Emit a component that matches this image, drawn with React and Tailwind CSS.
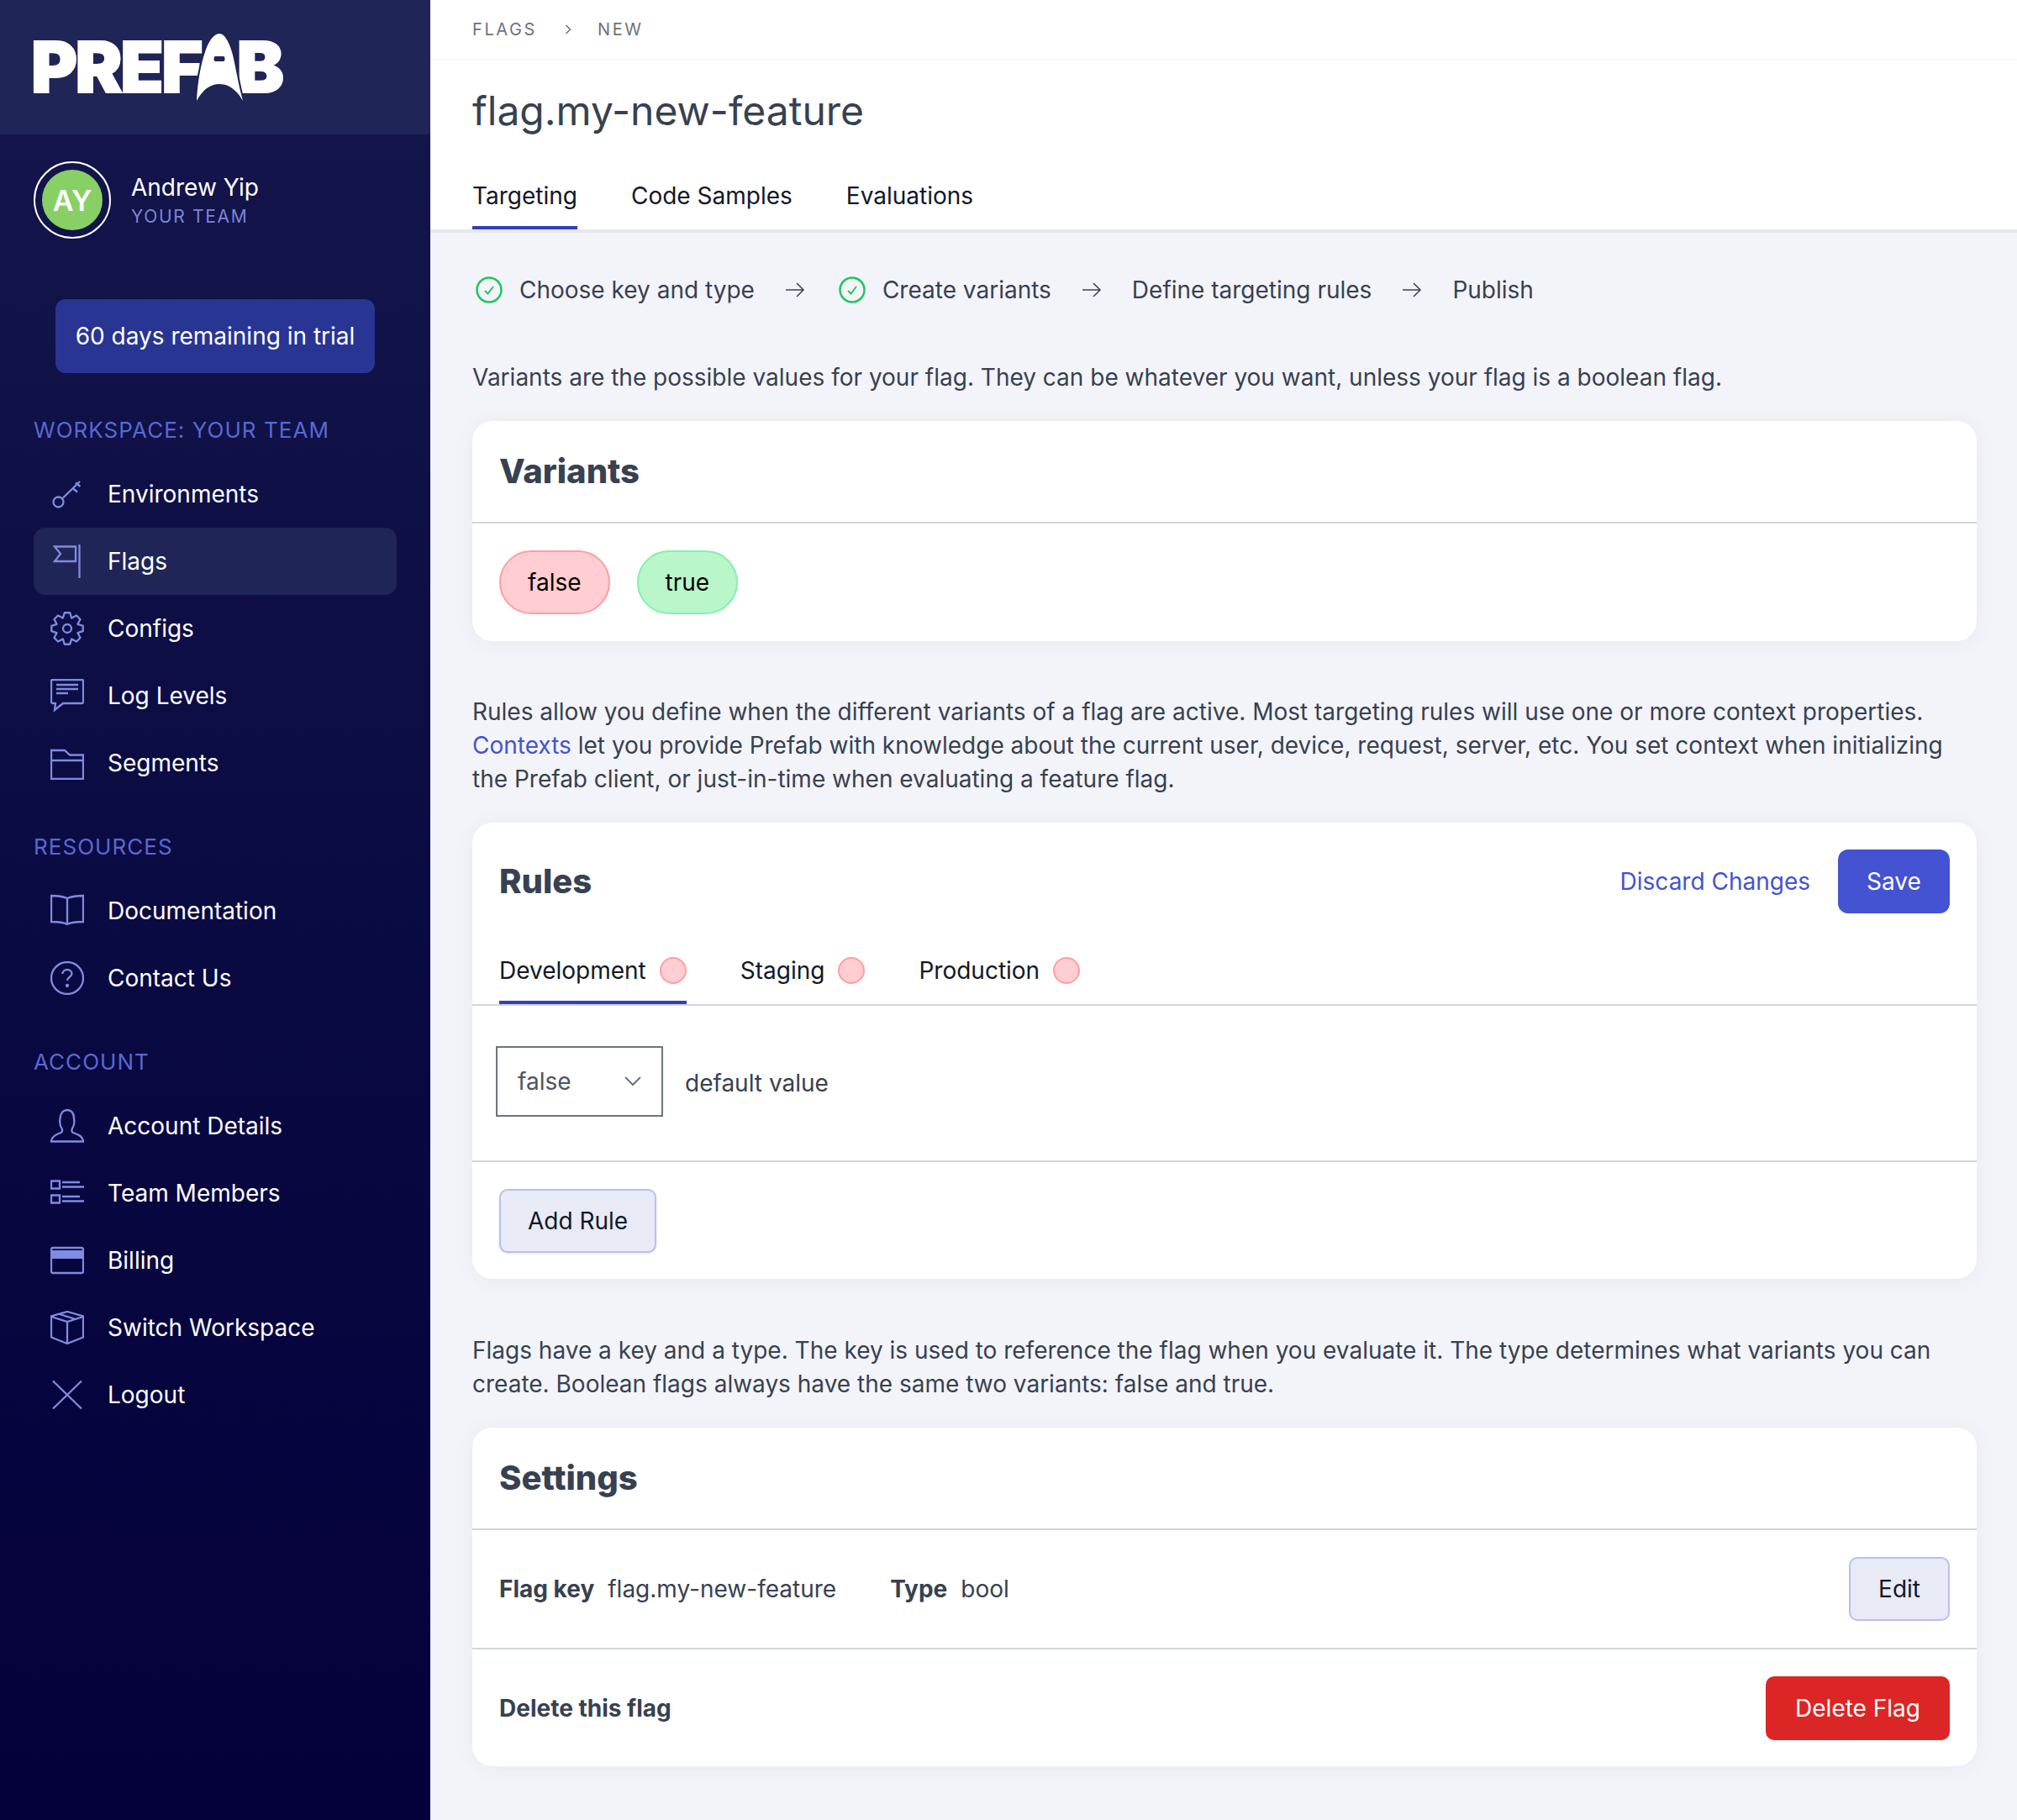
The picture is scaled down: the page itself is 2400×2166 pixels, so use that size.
import React from "react";

const gearPath = () => {
  const pts = [];
  for (let i = 0; i < 8; i++) {
    const a = (i * Math.PI) / 4 - Math.PI / 2;
    const offs = [[-0.39, 13.5], [-0.17, 19], [0.17, 19], [0.39, 13.5]];
    offs.forEach(([d, r]) => {
      pts.push(`${(20 + r * Math.cos(a + d)).toFixed(2)} ${(20 + r * Math.sin(a + d)).toFixed(2)}`);
    });
  }
  return "M" + pts.join("L") + "Z";
};

const Icon = ({ children }) => (
  <svg viewBox="0 0 40 40" className="w-10 h-10 shrink-0 text-[#7f8ce0]" fill="none" stroke="currentColor" strokeWidth="2.300">
    {children}
  </svg>
);

const icons = {
  key: (
    <Icon>
      <circle cx="9.500" cy="29.500" r="6" />
      <path d="M14 25.500L35 5M30 6.500l5.500 4.500M26.500 13l5.500 4.500" />
    </Icon>
  ),
  flag: (
    <Icon>
      <path d="M34.500 0v40" />
      <path d="M30 2.500H5l7 8.500-7 9h25z" />
    </Icon>
  ),
  gear: (
    <Icon>
      <path d={gearPath()} strokeLinejoin="round" />
      <circle cx="20" cy="20" r="5" />
    </Icon>
  ),
  log: (
    <Icon>
      <path d="M2.500 1h35a1.500 1.500 0 0 1 1.500 1.500v25a1.500 1.500 0 0 1-1.500 1.500H15l-10 8 1-8H2.500A1.500 1.500 0 0 1 1 27.500v-25A1.500 1.500 0 0 1 2.500 1z" />
      <path d="M7 7h26M7 12h26M7 17h14" />
    </Icon>
  ),
  folder: (
    <Icon>
      <path d="M1 5h16l6 5.500h16V39H1zM1 17h38" />
    </Icon>
  ),
  book: (
    <Icon>
      <path d="M20 5c-5-2-12-3-19-3v31c7 0 14 .500 19 3 5-2.500 12-3 19-3V2c-7 0-14 1-19 3zM20 5v31" />
    </Icon>
  ),
  help: (
    <Icon>
      <circle cx="20" cy="20" r="19" />
      <path d="M14.500 15c0-3 2.500-5 5.500-5s5.500 2 5.500 4.800c0 4-5.500 4-5.500 8.200" />
      <circle cx="20" cy="29" r="1" fill="currentColor" />
    </Icon>
  ),
  user: (
    <Icon>
      <path d="M1 38.500h38c0-6-6-8.500-12-10.500-2-1-2-3.500-.5-6 2.500-3 2-6.500 1.500-11C28 4 24 1 20 1S12 4 11.500 11c-.5 4.500-1 8 1.500 11 1.500 2.500 1.500 5-.5 6C6.500 30 1 32.500 1 38.500z" />
    </Icon>
  ),
  list: (
    <Icon>
      <path d="M1 5.500h10v9H1zM1 22.500h10v9H1zM14 7h21M14 12.500h26M14 24h21M14 29.500h26" />
    </Icon>
  ),
  card: (
    <Icon>
      <rect x="1" y="5" width="38" height="30" rx="2" />
      <rect x="1" y="8" width="38" height="10" fill="currentColor" stroke="none" />
    </Icon>
  ),
  box: (
    <Icon>
      <path d="M20 1 39 6.500v25L20 39 1 31.500v-25zM1 7l19 6 19-6M20 13v26M11 4l19 6" />
    </Icon>
  ),
  x: (
    <Icon>
      <path d="M3 3.500 37 36.500M37 3.500 3 36.500" />
    </Icon>
  ),
};

const NavItem = ({ icon, label, active }) => (
  <div className={`h-20 rounded-[14px] flex items-center pl-5 ${active ? "bg-[#1f2557]" : ""}`}>
    {icons[icon]}
    <span className="ml-[28px] text-[28px] text-white">{label}</span>
  </div>
);

const SectionLabel = ({ children, className }) => (
  <div className={`text-[26px] leading-10 tracking-[0.04em] text-[#5a68d2] uppercase ${className}`}>{children}</div>
);

const Logo = () => (
  <div className="flex items-start h-[80px] -ml-[3px] text-white font-black text-[84px] leading-[80px] tracking-[-0.03em]">
    <span className="[-webkit-text-stroke:2px_white]">PREF</span>
    <svg viewBox="0 0 57 80" className="relative z-10 w-[57px] h-20 -ml-[6px] shrink-0 overflow-visible">
      {/* rocket stands in for the A */}
      <path
        fill="white"
        stroke="#1f2557"
        strokeWidth="4"
        paintOrder="stroke"
        fillRule="evenodd"
        d="M28 0c6 0 11 9 15 22 4 14 7 36 13 58-5-9-14-20-28-20S6 71 1 80c1-22 5-44 10-58C15 9 22 0 28 0zM23 27c-2 0-2 6 0 6h10c2 0 2-6 0-6z"
      />
    </svg>
    <span className="-ml-[8px] [-webkit-text-stroke:2px_white]">B</span>
  </div>
);

const Card = ({ children, className }) => (
  <section className={`bg-white rounded-[24px] shadow-[0_2px_24px_rgba(60,70,130,0.06)] ${className}`}>{children}</section>
);

const Check = ({ className }) => (
  <svg viewBox="0 0 32 32" className={`w-8 h-8 shrink-0 ${className}`} fill="none" stroke="#22c55e" strokeWidth="2.500">
    <circle cx="16" cy="16" r="14.500" />
    <path d="M11 17l3.500 3.500L21 12" strokeWidth="2" />
  </svg>
);

const Arrow = () => (
  <svg viewBox="0 0 24 24" className="w-6 h-6 mx-[36px] shrink-0" fill="none" stroke="#374151" strokeWidth="1.500">
    <path d="M1 12h21M14 4l8 8-8 8" />
  </svg>
);

const Dot = () => <span className="ml-4 w-8 h-8 rounded-full bg-[#ffcdd2] border-2 border-[#ff9e9e]" />;

const EnvTab = ({ label, active }) => (
  <div className={`h-[76px] flex items-center border-b-4 ${active ? "border-[#3240b8]" : "border-transparent"}`}>
    <span className="text-[#111827]">{label}</span>
    <Dot />
  </div>
);

export default function App() {
  return (
    <div className="flex min-h-[2166px] bg-[#f3f4f9] font-['Inter',sans-serif] text-[#374151]">
      <aside className="w-[512px] shrink-0 flex flex-col bg-gradient-to-b from-[#15164b] to-[#04003a]">
        <div className="h-[160px] bg-[#1f2557] pl-10 pt-10 shrink-0">
          <Logo />
        </div>
        <div className="h-[156px] flex items-center pl-10 shrink-0">
          <div className="w-[92px] h-[92px] rounded-full border-2 border-white flex items-center justify-center">
            <div className="w-[72px] h-[72px] rounded-full bg-[#88d066] flex items-center justify-center text-white font-semibold text-[34px]">AY</div>
          </div>
          <div className="ml-6">
            <div className="text-[28px] leading-9 text-white">Andrew Yip</div>
            <div className="mt-[3px] text-[21px] leading-7 tracking-[0.08em] text-[#7986d8]">YOUR TEAM</div>
          </div>
        </div>
        <div className="px-[66px] mt-10 shrink-0">
          <div className="h-[88px] rounded-[12px] bg-[#283593] flex items-center justify-center text-white text-[28px]">60 days remaining in trial</div>
        </div>
        <div className="px-10 mt-[48px]">
          <SectionLabel>Workspace: Your Team</SectionLabel>
          <div className="mt-[16px]">
            <NavItem icon="key" label="Environments" />
            <NavItem icon="flag" label="Flags" active />
            <NavItem icon="gear" label="Configs" />
            <NavItem icon="log" label="Log Levels" />
            <NavItem icon="folder" label="Segments" />
          </div>
          <SectionLabel className="mt-[40px]">Resources</SectionLabel>
          <div className="mt-[16px]">
            <NavItem icon="book" label="Documentation" />
            <NavItem icon="help" label="Contact Us" />
          </div>
          <SectionLabel className="mt-[40px]">Account</SectionLabel>
          <div className="mt-[16px]">
            <NavItem icon="user" label="Account Details" />
            <NavItem icon="list" label="Team Members" />
            <NavItem icon="card" label="Billing" />
            <NavItem icon="box" label="Switch Workspace" />
            <NavItem icon="x" label="Logout" />
          </div>
        </div>
      </aside>

      <main className="flex-1 min-w-0">
        <div className="h-[70px] bg-white flex items-center pl-[50px] pb-[1px] text-[20px] tracking-[0.13em] text-[#6b7280] shadow-[0_1px_3px_rgba(0,0,0,0.05)] relative">
          <span>FLAGS</span>
          <svg viewBox="0 0 12 12" className="w-3 h-3 ml-[31px] mr-[29px]" fill="none" stroke="#6b7280" strokeWidth="1.500">
            <path d="M3.500 1l5 5-5 5" />
          </svg>
          <span>NEW</span>
        </div>
        <div className="h-[207px] bg-white border-b-4 border-[#e5e7eb] pl-[50px] flex flex-col">
          <h1 className="mt-[29px] text-[48px] leading-[66px] text-[#374151]">flag.my-new-feature</h1>
          <div className="mt-[32px] flex gap-[64px] text-[28px] text-[#111827]">
            <div className="h-[76px] flex items-center border-b-4 border-[#3240b8]">Targeting</div>
            <div className="h-[76px] flex items-center border-b-4 border-transparent">Code Samples</div>
            <div className="h-[76px] flex items-center border-b-4 border-transparent">Evaluations</div>
          </div>
        </div>

        <div className="pl-[50px] pr-[48px] text-[28px]">
          <div className="mt-[48px] h-10 flex items-center pl-1">
            <Check />
            <span className="ml-5">Choose key and type</span>
            <Arrow />
            <Check className="ml-1" />
            <span className="ml-5">Create variants</span>
            <Arrow />
            <span>Define targeting rules</span>
            <Arrow />
            <span>Publish</span>
          </div>

          <p className="mt-[64px] leading-10">Variants are the possible values for your flag. They can be whatever you want, unless your flag is a boolean flag.</p>

          <Card className="mt-[32px] h-[262px]">
            <div className="h-[122px] border-b-2 border-[#d1d5db] flex items-center pl-8">
              <h2 className="text-[40px] font-extrabold text-[#374151]">Variants</h2>
            </div>
            <div className="flex gap-8 pl-8 pt-8">
              <span className="h-[76px] px-8 flex items-center rounded-full bg-[#ffcdd2] border-2 border-[#ff9e9e] text-black">false</span>
              <span className="h-[76px] px-8 flex items-center rounded-full bg-[#b9f6ca] border-2 border-[#86efac] text-black">true</span>
            </div>
          </Card>

          <p className="mt-[64px] leading-10">
            Rules allow you define when the different variants of a flag are active. Most targeting rules will use one or more context properties.{" "}
            <span className="text-[#4353d1]">Contexts</span> let you provide Prefab with knowledge about the current user, device, request, server, etc. You set context when initializing the Prefab client, or just-in-time when evaluating a feature flag.
          </p>

          <Card className="mt-[32px] h-[543px]">
            <div className="flex items-center justify-between px-8 pt-8">
              <h2 className="text-[40px] font-extrabold text-[#374151]">Rules</h2>
              <div className="flex items-center">
                <span className="text-[#4353d1]">Discard Changes</span>
                <span className="ml-[33px] h-[76px] w-[133px] rounded-[12px] bg-[#4353d1] text-white flex items-center justify-center">Save</span>
              </div>
            </div>
            <div className="mt-[32px] flex border-b-2 border-[#d1d5db] pl-8 gap-[64px]">
              <EnvTab label="Development" active />
              <EnvTab label="Staging" />
              <EnvTab label="Production" />
            </div>
            <div className="h-[186px] border-b-2 border-[#d1d5db] flex items-start pl-7 pt-[48px]">
              <div className="w-[199px] h-[84px] border-2 border-[#6b7280] flex items-center justify-between pl-6 pr-[24px] text-[#4b5563]">
                false
                <svg viewBox="0 0 20 12" className="w-5 h-3" fill="none" stroke="#6b7280" strokeWidth="2">
                  <path d="M1 1l9 9 9-9" />
                </svg>
              </div>
              <span className="ml-[26px] mt-[23px]">default value</span>
            </div>
            <div className="pl-8 pt-[32px]">
              <span className="inline-flex h-[76px] px-8 items-center rounded-[10px] bg-[#e8eaf6] border-2 border-[#b9c0ef] text-[#111827] shadow-sm">Add Rule</span>
            </div>
          </Card>

          <p className="mt-[65px] leading-10">Flags have a key and a type. The key is used to reference the flag when you evaluate it. The type determines what variants you can create. Boolean flags always have the same two variants: false and true.</p>

          <Card className="mt-[32px] h-[403px]">
            <div className="h-[122px] border-b-2 border-[#d1d5db] flex items-center pl-8">
              <h2 className="text-[40px] font-extrabold text-[#374151]">Settings</h2>
            </div>
            <div className="h-[142px] border-b-2 border-[#d1d5db] flex items-center px-8">
              <b className="font-bold">Flag key</b>
              <span className="ml-4">flag.my-new-feature</span>
              <b className="font-bold ml-16">Type</b>
              <span className="ml-4">bool</span>
              <span className="ml-auto h-[76px] px-[33px] flex items-center rounded-[10px] bg-[#e8eaf6] border-2 border-[#b9c0ef] text-[#111827]">Edit</span>
            </div>
            <div className="h-[139px] flex items-center px-8 justify-between">
              <b className="font-bold">Delete this flag</b>
              <span className="h-[76px] px-[35px] flex items-center rounded-[10px] bg-[#dc2626] text-white">Delete Flag</span>
            </div>
          </Card>
        </div>
      </main>
    </div>
  );
}
